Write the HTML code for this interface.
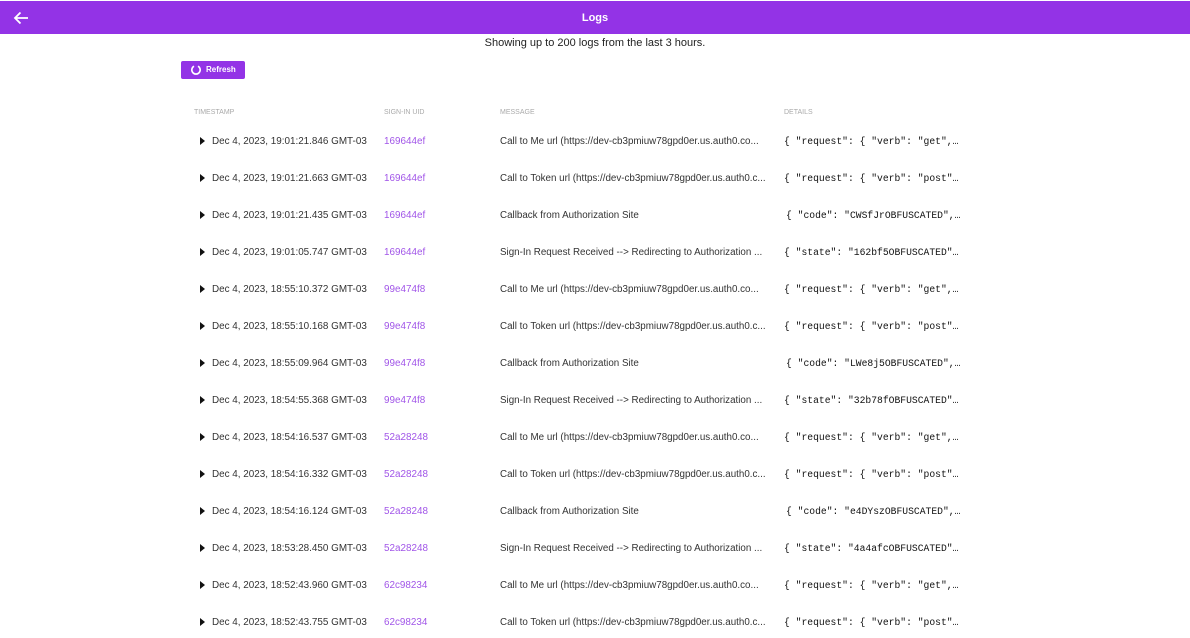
<!DOCTYPE html>
<html><head><style>
body{margin:0;width:1190px;height:638px;overflow:hidden;background:#fff;font-family:"Liberation Sans",sans-serif;position:relative}
.hdr{position:absolute;top:1px;left:0;width:1190px;height:33px;background:#9333e6;color:#fff}
.hdr .t{position:absolute;left:0;right:0;top:11px;text-align:center;font-size:11px;font-weight:bold}
.sub{position:absolute;top:37px;left:0;right:0;text-align:center;font-size:11px;color:#222}
.btn{position:absolute;left:181px;top:61px;width:64px;height:18px;background:#9333e6;border-radius:2px;color:#fff;font-size:8px;font-weight:bold}
.btn span{position:absolute;left:25px;top:4px}
.h{position:absolute;top:109px;font-size:7px;color:#aaa}
.r{position:absolute;font-size:9.9px;color:#333;white-space:nowrap}
.u{color:#a155e8}
.d{font-family:"Liberation Mono",monospace;font-size:9.7px;color:#111}
.tri{position:absolute;width:0;height:0;border-left:5px solid #111;border-top:4px solid transparent;border-bottom:4px solid transparent}
</style></head><body>
<div class="hdr"><svg style="position:absolute;left:13px;top:10px" width="16" height="14" viewBox="0 0 16 14"><path d="M15 7H2M7.5 1.5 2 7l5.5 5.5" stroke="#fff" stroke-width="1.8" fill="none"/></svg><div class="t">Logs</div></div>
<div class="sub">Showing up to 200 logs from the last 3 hours.</div>
<div class="btn"><svg style="position:absolute;left:9px;top:3px" width="12" height="12" viewBox="0 0 12 12"><path d="M4 2.2A4.2 4.2 0 1 0 8 2.2" stroke="#fff" stroke-width="1.6" fill="none"/></svg><span>Refresh</span></div>
<div class="h" style="left:194px">TIMESTAMP</div>
<div class="h" style="left:384px">SIGN-IN UID</div>
<div class="h" style="left:500px">MESSAGE</div>
<div class="h" style="left:784px">DETAILS</div>
<div id="rows"></div>
<script>
var d=[["19:01:21.846","169644ef","Call to Me url (https://dev-cb3pmiuw78gpd0er.us.auth0.co...",'{ "request": { "verb": "get",…'],
["19:01:21.663","169644ef","Call to Token url (https://dev-cb3pmiuw78gpd0er.us.auth0.c...",'{ "request": { "verb": "post"…'],
["19:01:21.435","169644ef","Callback from Authorization Site",'{ "code": "CWSfJrOBFUSCATED",…'],
["19:01:05.747","169644ef","Sign-In Request Received --> Redirecting to Authorization ...",'{ "state": "162bf5OBFUSCATED"…'],
["18:55:10.372","99e474f8","Call to Me url (https://dev-cb3pmiuw78gpd0er.us.auth0.co...",'{ "request": { "verb": "get",…'],
["18:55:10.168","99e474f8","Call to Token url (https://dev-cb3pmiuw78gpd0er.us.auth0.c...",'{ "request": { "verb": "post"…'],
["18:55:09.964","99e474f8","Callback from Authorization Site",'{ "code": "LWe8j5OBFUSCATED",…'],
["18:54:55.368","99e474f8","Sign-In Request Received --> Redirecting to Authorization ...",'{ "state": "32b78fOBFUSCATED"…'],
["18:54:16.537","52a28248","Call to Me url (https://dev-cb3pmiuw78gpd0er.us.auth0.co...",'{ "request": { "verb": "get",…'],
["18:54:16.332","52a28248","Call to Token url (https://dev-cb3pmiuw78gpd0er.us.auth0.c...",'{ "request": { "verb": "post"…'],
["18:54:16.124","52a28248","Callback from Authorization Site",'{ "code": "e4DYszOBFUSCATED",…'],
["18:53:28.450","52a28248","Sign-In Request Received --> Redirecting to Authorization ...",'{ "state": "4a4afcOBFUSCATED"…'],
["18:52:43.960","62c98234","Call to Me url (https://dev-cb3pmiuw78gpd0er.us.auth0.co...",'{ "request": { "verb": "get",…'],
["18:52:43.755","62c98234","Call to Token url (https://dev-cb3pmiuw78gpd0er.us.auth0.c...",'{ "request": { "verb": "post"…']];
var h="";d.forEach(function(r,i){var y=136+i*37;
var ds=r[2].indexOf("Callback")==0?786:784;
h+='<div class="tri" style="left:200px;top:'+(y+1)+'px"></div>'+
'<div class="r" style="left:212px;top:'+y+'px">Dec 4, 2023, '+r[0]+' GMT-03</div>'+
'<div class="r u" style="left:384px;top:'+y+'px">'+r[1]+'</div>'+
'<div class="r" style="left:500px;top:'+y+'px;font-size:9.8px">'+r[2].replace(/</g,"&lt;").replace(/>/g,"&gt;")+'</div>'+
'<div class="r d" style="left:'+ds+'px;top:'+y+'px">'+r[3]+'</div>';});
document.getElementById("rows").innerHTML=h;
</script>
</body></html>
